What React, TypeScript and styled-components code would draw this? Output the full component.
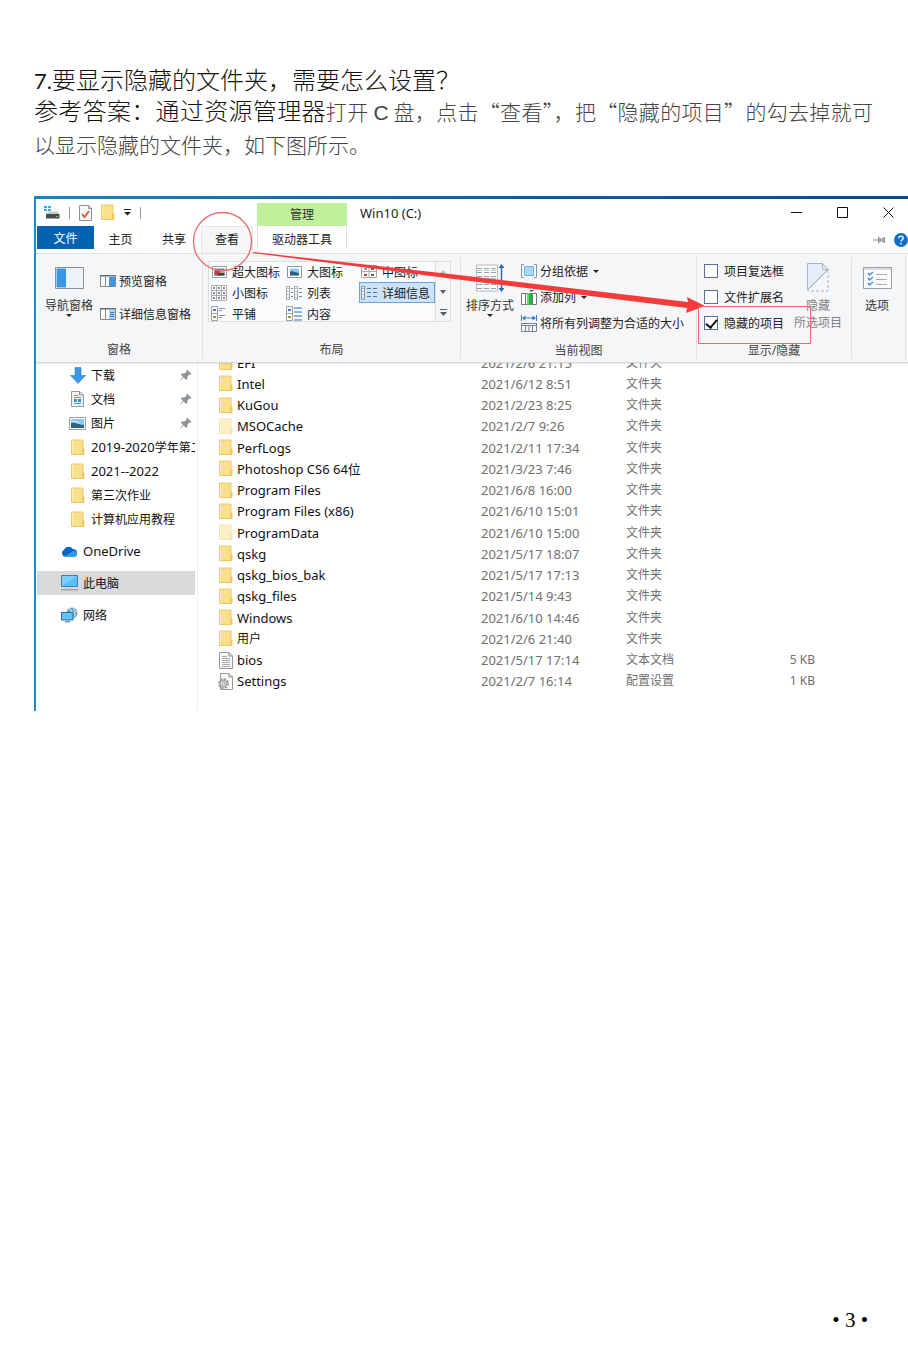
import React from 'react';
import styled, { createGlobalStyle, css } from 'styled-components';

const GlobalStyle = createGlobalStyle`
  * { box-sizing: border-box; }
  body { margin: 0; background: #fff; }
  button { font: inherit; color: inherit; background: none; border: 0; padding: 0; margin: 0; }
  svg { display: block; flex: none; }
`;

const ui = '"Noto Sans", "Noto Sans CJK SC", sans-serif';

/* ---------- document ---------- */

const Page = styled.div`
  min-height: 100vh;
  display: flex;
  flex-direction: column;
  padding: 62px 0 29px 34px;
`;

const Copy = styled.section`
  padding-right: 35px;
  margin-bottom: 35px;
  font-family: "Noto Sans CJK SC", sans-serif;
  font-weight: 300;
`;

const Question = styled.h1`
  margin: 0;
  font-size: 24px;
  line-height: 33px;
  font-weight: 300;
  color: #111;
`;

const Numeral = styled.span`
  font-family: Lato, sans-serif;
  font-size: 22px;
  line-height: 24px;
  font-weight: 400;
`;

const Answer = styled.p`
  margin: 0;
  font-size: 21px;
  line-height: 33px;
  color: #444;
  text-align: justify;
`;

const Lead = styled.span`
  font-size: 24px;
  line-height: 24px;
  color: #111;
`;

const Latin = styled.span`
  font-family: "Liberation Sans", sans-serif;
  line-height: 24px;
`;

const PageNumber = styled.footer`
  margin-top: auto;
  padding-right: 40px;
  text-align: right;
  font: 21px/24px "Liberation Serif", serif;
  color: #000;
`;

/* ---------- window ---------- */

const Window = styled.div`
  position: relative;
  overflow: hidden;
  border-left: 2px solid #1c8bc4;
  font-family: ${ui};
  font-size: 12px;
  color: #222;
`;

const TopEdge = styled.div`
  height: 3px;
  background: linear-gradient(90deg, #1a84c0, #0f5ea8 50%, #0c4595);
`;

const Header = styled.header`
  display: grid;
  grid-template-columns: 221px 90px 1fr;
  grid-template-rows: 27px 27px;
`;

const QuickAccess = styled.div`
  display: flex;
  align-items: center;
  gap: 9px;
  padding-left: 8px;
`;

const Divider = styled.i`
  width: 1px;
  height: 12px;
  background: #999;
`;

const QuickButton = styled.button`
  display: grid;
  place-items: center;
`;

const ContextTitle = styled.div`
  align-self: end;
  height: 23px;
  line-height: 23px;
  text-align: center;
  background: #c1f09c;
  color: #333;
`;

const TitleBar = styled.div`
  display: flex;
  align-items: center;
  padding: 0 5px 0 13px;
  gap: 16px;
`;

const Title = styled.span`
  flex: 1;
`;

const WindowButton = styled.button`
  width: 30px;
  height: 24px;
  display: grid;
  place-items: center;
`;

const Tabs = styled.nav`
  display: flex;
  padding-left: 1px;
`;

const Tab = styled.button<{ $kind?: 'file' | 'active'; $w: number }>`
  width: ${p => p.$w}px;
  height: 27px;
  padding-bottom: 2px;
  ${p => p.$kind === 'file' && css`
    height: 23px;
    padding: 0;
    background: #0463b1;
    color: #fff;
  `}
  ${p => p.$kind === 'active' && css`
    background: #f5f6f7;
    border: 1px solid #e2e3e4;
    border-bottom: 0;
  `}
`;

const ContextTab = styled.button`
  height: 23px;
  border-left: 1px solid #ddd;
  border-right: 1px solid #ddd;
  padding-top: 2px;
`;

const TabTools = styled.div`
  display: flex;
  justify-content: flex-end;
  align-items: center;
  gap: 8px;
`;

/* ---------- ribbon ---------- */

const Ribbon = styled.div`
  position: relative;
  z-index: 1;
  display: flex;
  height: 110px;
  background: #f5f6f7;
  border-top: 1px solid #dfe0e1;
  border-bottom: 1px solid #d6d7d8;
  box-shadow: 0 1px 2px #0000001a;
`;

const Group = styled.section<{ $w: number }>`
  flex: none;
  width: ${p => p.$w}px;
  margin: 3px 0;
  border-right: 1px solid #e0e1e3;
  display: flex;
  flex-direction: column;
`;

const GroupBody = styled.div<{ $pad: number }>`
  display: flex;
  height: 79px;
  padding-top: 1px;
  padding-left: ${p => p.$pad}px;
`;

const GroupLabel = styled.h2`
  margin: 6px 0 0;
  font-size: 12px;
  line-height: 18px;
  font-weight: 400;
  text-align: center;
  color: #444;
`;

const BigButton = styled.button<{ $muted?: boolean }>`
  width: 50px;
  display: flex;
  flex-direction: column;
  align-items: center;
  justify-content: flex-start;
  white-space: nowrap;
  line-height: 17px;
  color: ${p => (p.$muted ? '#838383' : '#333')};
`;

const BigIcon = styled.span`
  height: 39px;
  display: grid;
  place-items: center;
`;

const Stack = styled.div<{ $row: number; $left: number; $top?: number }>`
  display: grid;
  grid-auto-rows: ${p => p.$row}px;
  margin-left: ${p => p.$left}px;
  padding-top: ${p => p.$top ?? 0}px;
  align-content: start;
`;

const SmallButton = styled.button`
  display: flex;
  align-items: center;
  gap: 3px;
  white-space: nowrap;
`;

const ArrowGlyph = styled.i`
  margin-left: 2px;
  border: 3px solid transparent;
  border-top-color: #222;
  border-bottom: 0;
`;

const DownArrow = styled(ArrowGlyph)`
  margin: 0;
`;

const Gallery = styled.div`
  display: grid;
  grid-template-columns: 226px 15px;
  height: 61px;
  margin-top: 3px;
  overflow: hidden;
  background: #fafbfc;
  border: 1px solid #dcdee0;
`;

const GalleryItems = styled.div`
  display: grid;
  grid-template-columns: 75px 75px 76px;
  grid-auto-rows: 21px;
  margin-top: -1px;
`;

const GalleryItem = styled.button<{ $selected?: boolean }>`
  display: flex;
  align-items: center;
  gap: 5px;
  padding-left: 1px;
  white-space: nowrap;
  border: 1px solid ${p => (p.$selected ? '#66a3e0' : 'transparent')};
  background: ${p => (p.$selected ? '#cce3f9' : 'transparent')};
`;

const GalleryIcon = styled.span`
  width: 16px;
  display: grid;
  place-items: center;
`;

const GalleryScroll = styled.div`
  display: grid;
  grid-template-rows: repeat(3, 20px);
  border-left: 1px solid #dcdee0;
  background: #f5f6f7;
`;

const ScrollButton = styled.button`
  display: grid;
  place-items: center;
`;

const CheckLabel = styled.label`
  display: flex;
  align-items: center;
  gap: 6px;
  white-space: nowrap;
`;

const CheckBox = styled.input`
  appearance: none;
  display: grid;
  place-items: center;
  width: 14px;
  height: 14px;
  margin: 0;
  background: #fff;
  border: 1px solid #5b7199;
  &:checked::after {
    content: '';
    width: 5px;
    height: 9px;
    margin-top: -2px;
    border: solid #111;
    border-width: 0 2px 2px 0;
    transform: rotate(40deg);
  }
`;

/* ---------- folder view ---------- */

const Explorer = styled.div`
  display: grid;
  grid-template-columns: 162px 1fr;
  height: 348px;
  overflow: hidden;
`;

const Sidebar = styled.nav`
  border-right: 1px solid #f0f0f0;
  padding: 0 2px 0 1px;
`;

const SideItem = styled.a<{ $level?: boolean; $selected?: boolean }>`
  display: flex;
  align-items: center;
  gap: 5px;
  height: 24px;
  margin-top: ${p => (p.$level ? 8 : 0)}px;
  padding-left: ${p => (p.$level ? 24 : 32)}px;
  overflow: hidden;
  white-space: nowrap;
  text-decoration: none;
  color: #111;
  background: ${p => (p.$selected ? '#d9d9d9' : 'transparent')};
`;

const SideIcon = styled.span`
  flex: none;
  width: 17px;
  display: grid;
  place-items: center;
`;

const SideText = styled.span`
  flex: 1 0 auto;
`;

const Wide = styled.span`
  font-size: 13px;
`;

const PinSlot = styled.span`
  margin-right: 3px;
`;

const Files = styled.table`
  width: 100%;
  height: 340px;
  margin-top: -11px;
  table-layout: fixed;
  border-collapse: collapse;
  line-height: 18px;
  td { padding: 0; white-space: nowrap; }
`;

const NameCell = styled.td`
  color: #111;
`;

const FileName = styled.span<{ $cjk: boolean }>`
  display: flex;
  align-items: center;
  gap: 4px;
  padding-left: 20px;
  font-size: ${p => (p.$cjk ? 12 : 13)}px;
`;

const FileIcon = styled.span<{ $faded?: boolean }>`
  width: 15px;
  display: flex;
  justify-content: flex-end;
  opacity: ${p => (p.$faded ? 0.5 : 1)};
`;

const MetaCell = styled.td<{ $latin?: boolean; $right?: boolean }>`
  font-size: ${p => (p.$latin ? 13 : 12)}px;
  text-align: ${p => (p.$right ? 'right' : 'left')};
  color: #707070;
`;

const Annotations = styled.svg`
  position: absolute;
  z-index: 2;
  top: 0;
  left: 0;
  pointer-events: none;
`;

/* ---------- icons ---------- */

const Folder = () => (
  <svg width="14" height="17" viewBox="0 0 14 17">
    <path d="M.5 1h11.500v14.500H.5z" fill="#fbe08c" stroke="#ecc968" />
    <path d="M11 9.500h1.500l1 1V15l-1 1H11z" fill="#f0ca5c" />
    <path d="M1.500 2v13" stroke="#fff0b8" />
  </svg>
);

const TextDoc = () => (
  <svg width="14" height="17" viewBox="0 0 14 17" fill="none">
    <path d="M.5.5h9.500L13.500 4v12.500H.5z" fill="#f7f7f7" stroke="#999" />
    <path d="M10 .5V4h3.500" stroke="#888" />
    <path d="M3 4.500h5M3 6.500h8M3 8.500h8M3 10.500h8M3 12.500h8M3 14.500h8" stroke="#aaa" />
  </svg>
);

const GearDoc = () => (
  <svg width="15" height="17" viewBox="0 0 15 17" fill="none">
    <path d="M2.500.5H11l3.500 3.500v12.500h-12z" fill="#fafafa" stroke="#999" />
    <path d="M11 .5V4h3.500" stroke="#888" />
    <circle cx="5.500" cy="10.500" r="4.500" stroke="#999" strokeWidth="2" strokeDasharray="2 1.500" />
    <circle cx="5.500" cy="10.500" r="3.500" fill="#dde0e2" stroke="#8f9498" />
    <circle cx="5.500" cy="10.500" r="1.300" fill="#fff" stroke="#8f9498" />
  </svg>
);

const Pin = () => (
  <svg width="12" height="12" viewBox="0 0 12 12">
    <path d="M7 .5 11.500 5l-1.200.7-.8-.2L7.500 7.500 7.300 10 6.200 11 3.600 8.300.8 11.200.4 10.800 3 7.700.8 5.500 2 4.600l2.600-.1 2-2-.2-1z" fill="#8a949c" />
  </svg>
);

const Download = () => (
  <svg width="16" height="17" viewBox="0 0 16 17">
    <path d="M5 .5h6v8h4.500L8 16.500.5 8.500H5z" fill="#3a97e4" stroke="#2f83cd" strokeWidth=".6" />
  </svg>
);

const DocBlue = () => (
  <svg width="13" height="16" viewBox="0 0 13 16" fill="none">
    <path d="M.5.5h8L12.500 4v11.500H.5z" fill="#eef6fb" stroke="#8d9aa4" />
    <path d="M8.500.5V4h4" stroke="#8d9aa4" />
    <path d="M3 4.500h4M3 6.500h7M3 12.500h7" stroke="#4fa3d8" />
    <path d="M3 8h3v3H3zM7 8h3v3H7z" fill="#3b90c9" />
  </svg>
);

const Picture = () => (
  <svg width="17" height="13" viewBox="0 0 17 13">
    <path d="M.5.5h16v12H.5z" fill="#fff" stroke="#9a9fa3" />
    <path d="M2 2h13v9H2z" fill="#8cc8f0" />
    <path d="M2 6c4-1 7 2 13 2v3H2z" fill="#2d6184" />
    <path d="M2 5c3-2 5 0 8 1" stroke="#e7f5ff" fill="none" />
  </svg>
);

const Cloud = () => (
  <svg width="17" height="11" viewBox="0 0 17 11">
    <path d="M4 10.500A3.600 3.600 0 0 1 3 3.700 5 5 0 0 1 11.800 3 4 4 0 0 1 14 10.500z" fill="#0a64c4" />
    <path d="M3.500 10.800 11 5.500a3.500 3.500 0 0 1 3.500-.3 3 3 0 0 1-.5 5.600z" fill="#2a9ce8" />
  </svg>
);

const Computer = () => (
  <svg width="17" height="16" viewBox="0 0 17 16">
    <path d="M.5.5h16v11H.5z" fill="#5cc0f8" stroke="#3e7fae" />
    <path d="M1 1h15L1 11z" fill="#8bd6ff" opacity=".7" />
    <path d="M5 12h7v1.500H5z" fill="#cfd4d8" />
    <path d="M0 14h17v1.500H0z" fill="#9fa6ab" />
  </svg>
);

const Network = () => (
  <svg width="17" height="16" viewBox="0 0 17 16">
    <circle cx="11" cy="6" r="5.500" fill="#5b9dbc" />
    <path d="M8 1.500c3 1 1 4 4 4s2 3 1 5M13 1c-1 2 1 3 3 4" stroke="#b9dbe8" fill="none" strokeWidth="1.500" />
    <path d="M.5 5.500h11.500v7.500H.5z" fill="#5fc3f8" stroke="#2a6f9e" />
    <path d="M4 14h5v1.500H4z" fill="#7f98a8" />
  </svg>
);

const DriveIcon = () => (
  <svg width="16" height="14" viewBox="0 0 16 14">
    <path d="M0 0h3v2H0zM4 0h3v2H4zM0 3h3v2H0zM4 3h3v2H4z" fill="#2bb3ea" />
    <path d="m3 7 1.500-1.500h9L15.500 8H2z" fill="#c5c8c9" />
    <path d="M2 8h13.500v4.500H2z" fill="#454b4d" />
    <path d="M12 10.500h2" stroke="#5be06a" />
  </svg>
);

const CheckDoc = () => (
  <svg width="13" height="16" viewBox="0 0 13 16" fill="none">
    <path d="M.5.5h9L12.500 3.500v12H.5z" fill="#f7f8f9" stroke="#8c9197" />
    <path d="M9.500.5v3h3" stroke="#8c9197" />
    <path d="m3 9 2.500 3 4.500-6" stroke="#e0572c" strokeWidth="1.800" />
  </svg>
);

const QatMenu = () => (
  <svg width="7" height="7" viewBox="0 0 7 7">
    <path d="M0 .5h7" stroke="#222" />
    <path d="M0 3h7L3.500 6.500z" fill="#222" />
  </svg>
);

const NavPane = () => (
  <svg width="29" height="22" viewBox="0 0 29 22">
    <path d="M.5.5h28v21H.5z" fill="#fff" stroke="#8a8f94" />
    <path d="M11 1h17v20H11z" fill="#eef3f8" />
    <path d="M1.500 1.500h9.500v19H1.500z" fill="#3b97e0" />
  </svg>
);

const PreviewPane = ({ lines }: { lines?: boolean }) => (
  <svg width="16" height="12" viewBox="0 0 16 12">
    <path d="M.5.5h15v11H.5z" fill="#fff" stroke="#7e858b" />
    <path d="M0 .5h16" stroke="#666e75" strokeWidth="2" />
    <path d="M5.500 1v10" stroke="#7e858b" />
    <path d="M9 2h6v9H9z" fill={lines ? '#a9d3f5' : '#3b97e0'} />
    {lines && <path d="M10 4.500h4M10 6.500h4M10 8.500h4" stroke="#347fbd" />}
  </svg>
);

const Sort = () => (
  <svg width="29" height="28" viewBox="0 0 29 28" fill="none">
    <path d="M.5 1h21v26H.5z" fill="#fdfdfd" stroke="#b4b8bb" />
    <path d="M1 4.500h20M1 8.500h20M1 12.500h20M1 16.500h20M1 20.500h20M1 24.500h20" stroke="#9aa3a8" strokeDasharray="5 2" />
    <path d="M1 6.500h20M1 14.500h20" stroke="#a9cfc6" strokeDasharray="5 2" />
    <path d="M25.500 2v24" stroke="#2d6cb0" strokeWidth="1.500" />
    <path d="m22.500 4 3-4 3 4zM22.500 24l3 4 3-4z" fill="#2d6cb0" />
  </svg>
);

const GroupBy = () => (
  <svg width="16" height="14" viewBox="0 0 16 14" fill="none">
    <path d="M3 .5H.5v13H3M13 .5h2.500v13H13" stroke="#8a9298" />
    <path d="M3.500 2.500h9v9h-9z" fill="#a8d8fa" stroke="#72b3e6" />
  </svg>
);

const AddColumn = () => (
  <svg width="16" height="15" viewBox="0 0 16 15" fill="none">
    <path d="M.5 3.500h15v11H.5z" fill="#fff" stroke="#6f777d" />
    <path d="M4.500 4v10M11.500 4v10" stroke="#6f777d" />
    <path d="M6 3h5v11.500H6z" fill="#67d672" />
    <path d="M8 3h3v11.500H8z" fill="#24b534" />
    <path d="M8 0h5l-2.500 2z" fill="#315b96" />
  </svg>
);

const FitColumns = () => (
  <svg width="16" height="17" viewBox="0 0 16 17" fill="none">
    <path d="M.5 0v6M15.500 0v6M2 3h12" stroke="#3a7ebd" />
    <path d="m1 3 3.500-2.500v5zM15 3l-3.500-2.500v5z" fill="#3a7ebd" />
    <path d="M0 8.500h16M.5 8v8.500h15V8M0 10.500h16M4.500 11v5M8 11v5M11.500 11v5" stroke="#7b8389" />
  </svg>
);

const HideDoc = () => (
  <svg width="22" height="29" viewBox="0 0 22 29" fill="none">
    <path d="M.5 27V.5h15l5.500 6z" fill="#e6eff9" stroke="#a7b4c3" />
    <path d="M15.500.5V6.500H21" stroke="#a7b4c3" />
    <path d="M21 7v21H.5" stroke="#a7b4c3" strokeDasharray="3 2" />
    <path d="M.5 27 21 6.500" stroke="#a7b4c3" />
  </svg>
);

const OptionsIcon = () => (
  <svg width="29" height="22" viewBox="0 0 29 22" fill="none">
    <path d="M.5.5h28v21H.5z" fill="#fbfbfb" stroke="#979da2" />
    <path d="M1 2h27" stroke="#b8bcc0" />
    <path d="m5 6 1.500 2L10 5M5 11l1.500 2 3.500-3M5 16l1.500 2 3.500-3" stroke="#3c93dc" strokeWidth="1.500" />
    <path d="M13 7.500h11M13 12.500h11M13 17.500h11" stroke="#a9aeb2" />
  </svg>
);

const HugeIcon = () => (
  <svg width="15" height="12" viewBox="0 0 15 12">
    <path d="M.5.5h14v11H.5z" fill="#fff" stroke="#9ba1a6" />
    <path d="M2.500 2.500h10v7h-10z" fill="#4c82c4" />
    <path d="M2.500 4.500h5v5h-5z" fill="#c1433b" />
    <path d="M8 4h4v4H8z" fill="#e5a04e" />
    <path d="M6 7h6.500v2.500H6z" fill="#37445b" />
  </svg>
);

const LargeIcon = () => (
  <svg width="15" height="12" viewBox="0 0 15 12">
    <path d="M.5.5h14v11H.5z" fill="#fff" stroke="#8e9499" />
    <path d="M3 2.500h9v7H3z" fill="#8ccaf2" />
    <path d="M3 5.500c3-1 5 1 9 1.500v2.500H3z" fill="#2c5f80" />
  </svg>
);

const MediumIcon = () => (
  <svg width="16" height="13" viewBox="0 0 16 13" fill="none">
    <path d="M.5.5h15v12H.5zM8 .5v12M.5 6.500h15" fill="#fff" stroke="#a4a9ae" />
    <path d="M3 3h3v2H3z" fill="#7aa0c0" />
    <path d="M10 3h3v2h-3zM3 9h3v2H3z" fill="#b8443c" />
    <path d="M10 9h3v2h-3z" fill="#7b5a3a" />
  </svg>
);

const SmallIcon = () => (
  <svg width="16" height="16" viewBox="0 0 16 16" fill="none">
    <path d="M.5.5h15v15H.5zM5.500.5v15M10.500.5v15M.5 5.500h15M.5 10.500h15" fill="#fff" stroke="#a9aeb2" />
    <path d="M2 3h2M7 3h2M2 8h2M12 8h2M2 13h2M7 13h2" stroke="#4f6478" strokeWidth="1.500" />
    <path d="M12 3h2M7 8h2M12 13h2" stroke="#c0433b" strokeWidth="1.500" />
  </svg>
);

const ListIcon = () => (
  <svg width="16" height="14" viewBox="0 0 16 14" fill="none">
    <path d="M.5.5h3v13h-3zM8.500.5h3v13h-3z" fill="#fff" stroke="#a4a9ae" />
    <path d="M2 2v10M10 2v10" stroke="#777f86" strokeDasharray="1 2" />
    <path d="M5 2.500h2M5 6.500h2M5 10.500h2M13 2.500h3M13 6.500h3M13 10.500h3" stroke="#7e868d" />
  </svg>
);

const DetailsIcon = () => (
  <svg width="17" height="14" viewBox="0 0 17 14" fill="none">
    <path d="M.5.5h3v13h-3z" fill="#fff" stroke="#8298ae" />
    <path d="M2 2v10" stroke="#4d6f93" strokeDasharray="1 2" />
    <path d="M6 2.500h4M12 2.500h4M6 6.500h4M12 6.500h4M6 10.500h4M12 10.500h4" stroke="#55779c" />
  </svg>
);

const TilesIcon = ({ blue }: { blue?: boolean }) => (
  <svg width="16" height="15" viewBox="0 0 16 15" fill="none">
    <path d="M.5.5h6v14h-6zM.5 7.500h6" fill="#fff" stroke="#9aa0a5" />
    <path d="M2 3h3v2H2z" fill="#3f82bd" />
    <path d="M2 10h3v2H2z" fill="#889a42" />
    {blue
      ? <path d="M8 2h8M8 6h8M8 10h8M8 14h8" stroke="#6c9bd2" strokeWidth="1.500" />
      : <path d="M8 2.500h6M8 4.500h3M8 9.500h6M8 11.500h3" stroke="#8b9298" />}
  </svg>
);

/* ---------- data ---------- */

const layouts: { label: string; icon: React.ReactNode; selected?: boolean }[] = [
  { label: '超大图标', icon: <HugeIcon /> },
  { label: '大图标', icon: <LargeIcon /> },
  { label: '中图标', icon: <MediumIcon /> },
  { label: '小图标', icon: <SmallIcon /> },
  { label: '列表', icon: <ListIcon /> },
  { label: '详细信息', icon: <DetailsIcon />, selected: true },
  { label: '平铺', icon: <TilesIcon /> },
  { label: '内容', icon: <TilesIcon blue /> },
];

const quickItems: { latin?: string; label?: string; icon: React.ReactNode; pinned?: boolean }[] = [
  { label: '下载', icon: <Download />, pinned: true },
  { label: '文档', icon: <DocBlue />, pinned: true },
  { label: '图片', icon: <Picture />, pinned: true },
  { latin: '2019-2020', label: '学年第二', icon: <Folder /> },
  { latin: '2021--2022', icon: <Folder /> },
  { label: '第三次作业', icon: <Folder /> },
  { label: '计算机应用教程', icon: <Folder /> },
];

const roots: { latin?: string; label?: string; icon: React.ReactNode; selected?: boolean }[] = [
  { latin: 'OneDrive', icon: <Cloud /> },
  { label: '此电脑', icon: <Computer />, selected: true },
  { label: '网络', icon: <Network /> },
];

type Row = [name: string, date: string, type: string, size?: string];

const rows: Row[] = [
  ['EFI', '2021/2/6 21:15', '文件夹'],
  ['Intel', '2021/6/12 8:51', '文件夹'],
  ['KuGou', '2021/2/23 8:25', '文件夹'],
  ['MSOCache', '2021/2/7 9:26', '文件夹'],
  ['PerfLogs', '2021/2/11 17:34', '文件夹'],
  ['Photoshop CS6 64位', '2021/3/23 7:46', '文件夹'],
  ['Program Files', '2021/6/8 16:00', '文件夹'],
  ['Program Files (x86)', '2021/6/10 15:01', '文件夹'],
  ['ProgramData', '2021/6/10 15:00', '文件夹'],
  ['qskg', '2021/5/17 18:07', '文件夹'],
  ['qskg_bios_bak', '2021/5/17 17:13', '文件夹'],
  ['qskg_files', '2021/5/14 9:43', '文件夹'],
  ['Windows', '2021/6/10 14:46', '文件夹'],
  ['用户', '2021/2/6 21:40', '文件夹'],
  ['bios', '2021/5/17 17:14', '文本文档', '5 KB'],
  ['Settings', '2021/2/7 16:14', '配置设置', '1 KB'],
];

const hiddenFolders = ['MSOCache', 'ProgramData'];

const iconFor = (type: string) =>
  type === '文本文档' ? <TextDoc /> : type === '配置设置' ? <GearDoc /> : <Folder />;

export default function App() {
  return (
    <Page lang="zh-CN">
      <GlobalStyle />
      <Copy>
        <Question><Numeral>7.</Numeral>{'要显示隐藏的文件夹\uFF0C需要怎么设置\uFF1F'}</Question>
        <Answer>
          <Lead>{'参考答案\uFF1A通过资源管理器'}</Lead>
          {'打开 '}<Latin>C</Latin>
          {' 盘\uFF0C点击\u201C查看\u201D\uFF0C把\u201C隐藏的项目\u201D的勾去掉就可以显示隐藏的文件夹\uFF0C如下图所示\u3002'}
        </Answer>
      </Copy>

      <Window>
        <TopEdge />
        <Header>
          <QuickAccess>
            <DriveIcon />
            <Divider />
            <QuickButton aria-label="属性"><CheckDoc /></QuickButton>
            <QuickButton aria-label="新建文件夹"><Folder /></QuickButton>
            <QuickButton aria-label="自定义快速访问工具栏"><QatMenu /></QuickButton>
            <Divider />
          </QuickAccess>
          <ContextTitle>管理</ContextTitle>
          <TitleBar>
            <Title><Wide>Win10 (C:)</Wide></Title>
            <WindowButton aria-label="最小化">
              <svg width="11" height="11" stroke="#111"><path d="M0 5.500h11" /></svg>
            </WindowButton>
            <WindowButton aria-label="最大化">
              <svg width="11" height="11" stroke="#111" fill="none"><path d="M.5.5h10v10H.5z" /></svg>
            </WindowButton>
            <WindowButton aria-label="关闭">
              <svg width="11" height="11" stroke="#111"><path d="m.5.500 10 10M10.500.5l-10 10" /></svg>
            </WindowButton>
          </TitleBar>
          <Tabs>
            <Tab $kind="file" $w={57}>文件</Tab>
            <Tab $w={53}>主页</Tab>
            <Tab $w={54}>共享</Tab>
            <Tab $kind="active" $w={52}>查看</Tab>
          </Tabs>
          <ContextTab>驱动器工具</ContextTab>
          <TabTools>
            <QuickButton aria-label="固定功能区">
              <svg width="13" height="8" viewBox="0 0 13 8"><path d="M0 3.500h5v1H0zM5 1h1.500v1.500h4V1H12v6h-1.500V5.500h-4V7H5z" fill="#8c9196" /><path d="M6.500 2.500h4v3h-4z" fill="#a5aaae" /></svg>
            </QuickButton>
            <QuickButton aria-label="帮助">
              <svg width="14" height="14" viewBox="0 0 14 14" fill="none">
                <circle cx="7" cy="7" r="7" fill="#0f6fc9" />
                <path d="M4.800 5.200C4.800 2.400 9.200 2.500 9.200 5.100 9.200 6.800 7 6.700 7 8.600M7 9.800v1.500" stroke="#fff" strokeWidth="1.400" />
              </svg>
            </QuickButton>
          </TabTools>
        </Header>

        <Ribbon>
          <Group $w={167}>
            <GroupBody $pad={8}>
              <BigButton><BigIcon><NavPane /></BigIcon>导航窗格<DownArrow /></BigButton>
              <Stack $row={33} $left={6} $top={6}>
                <SmallButton><PreviewPane />预览窗格</SmallButton>
                <SmallButton><PreviewPane lines />详细信息窗格</SmallButton>
              </Stack>
            </GroupBody>
            <GroupLabel>窗格</GroupLabel>
          </Group>

          <Group $w={258}>
            <GroupBody $pad={5}>
              <Gallery>
                <GalleryItems>
                  {layouts.map(l => (
                    <GalleryItem key={l.label} $selected={l.selected}>
                      <GalleryIcon>{l.icon}</GalleryIcon>{l.label}
                    </GalleryItem>
                  ))}
                </GalleryItems>
                <GalleryScroll>
                  <ScrollButton aria-label="上一行">
                    <svg width="6" height="4"><path d="M0 4 3 0l3 4z" fill="#b6babd" /></svg>
                  </ScrollButton>
                  <ScrollButton aria-label="下一行">
                    <svg width="6" height="4"><path d="m0 0 3 4 3-4z" fill="#555d66" /></svg>
                  </ScrollButton>
                  <ScrollButton aria-label="更多">
                    <svg width="7" height="7"><path d="M0 0h7v1H0zM0 3l3.500 4L7 3z" fill="#555d66" /></svg>
                  </ScrollButton>
                </GalleryScroll>
              </Gallery>
            </GroupBody>
            <GroupLabel>布局</GroupLabel>
          </Group>

          <Group $w={236}>
            <GroupBody $pad={4}>
              <BigButton><BigIcon><Sort /></BigIcon>排序方式<DownArrow /></BigButton>
              <Stack $row={26} $left={6}>
                <SmallButton><GroupBy />分组依据<ArrowGlyph /></SmallButton>
                <SmallButton><AddColumn />添加列<ArrowGlyph /></SmallButton>
                <SmallButton><FitColumns />将所有列调整为合适的大小</SmallButton>
              </Stack>
            </GroupBody>
            <GroupLabel>当前视图</GroupLabel>
          </Group>

          <Group $w={155}>
            <GroupBody $pad={7}>
              <Stack $row={26} $left={0}>
                <CheckLabel><CheckBox type="checkbox" />项目复选框</CheckLabel>
                <CheckLabel><CheckBox type="checkbox" />文件扩展名</CheckLabel>
                <CheckLabel><CheckBox type="checkbox" defaultChecked />隐藏的项目</CheckLabel>
              </Stack>
              <Stack $row={78} $left={9}>
                <BigButton $muted><BigIcon><HideDoc /></BigIcon>隐藏<br />所选项目</BigButton>
              </Stack>
            </GroupBody>
            <GroupLabel>显示/隐藏</GroupLabel>
          </Group>

          <Group $w={54}>
            <GroupBody $pad={0}>
              <BigButton><BigIcon><OptionsIcon /></BigIcon>选项</BigButton>
            </GroupBody>
          </Group>
        </Ribbon>

        <Explorer>
          <Sidebar>
            {quickItems.map((q, i) => (
              <SideItem key={i} href="#">
                <SideIcon>{q.icon}</SideIcon>
                <SideText>{q.latin && <Wide>{q.latin}</Wide>}{q.label}</SideText>
                {q.pinned && <PinSlot><Pin /></PinSlot>}
              </SideItem>
            ))}
            {roots.map((r, i) => (
              <SideItem key={i} href="#" $level $selected={r.selected}>
                <SideIcon>{r.icon}</SideIcon>
                <SideText>{r.latin && <Wide>{r.latin}</Wide>}{r.label}</SideText>
              </SideItem>
            ))}
          </Sidebar>
          <Files>
            <colgroup>
              <col style={{ width: 283 }} />
              <col style={{ width: 145 }} />
              <col style={{ width: 114 }} />
              <col style={{ width: 75 }} />
              <col />
            </colgroup>
            <tbody>
              {rows.map(([name, date, type, size]) => (
                <tr key={name}>
                  <NameCell>
                    <FileName $cjk={name === '用户'}>
                      <FileIcon $faded={hiddenFolders.includes(name)}>{iconFor(type)}</FileIcon>
                      {name}
                    </FileName>
                  </NameCell>
                  <MetaCell $latin>{date}</MetaCell>
                  <MetaCell>{type}</MetaCell>
                  <MetaCell $right>{size}</MetaCell>
                  <td />
                </tr>
              ))}
            </tbody>
          </Files>
        </Explorer>

        <Annotations width="780" height="150" viewBox="36 196 780 150" fill="none">
          <ellipse cx="222.500" cy="241.500" rx="29" ry="29" stroke="#ee6b70" strokeWidth="1.300" />
          <path d="m253 252 197 22 238 28-1-5 18 9-19 7 1-5-237-29.500-197-25.500z" fill="#f43b3b" />
          <path d="M698.500 306.500h112v37h-112z" stroke="#ee6b70" />
        </Annotations>
      </Window>

      <PageNumber>• 3 •</PageNumber>
    </Page>
  );
}
